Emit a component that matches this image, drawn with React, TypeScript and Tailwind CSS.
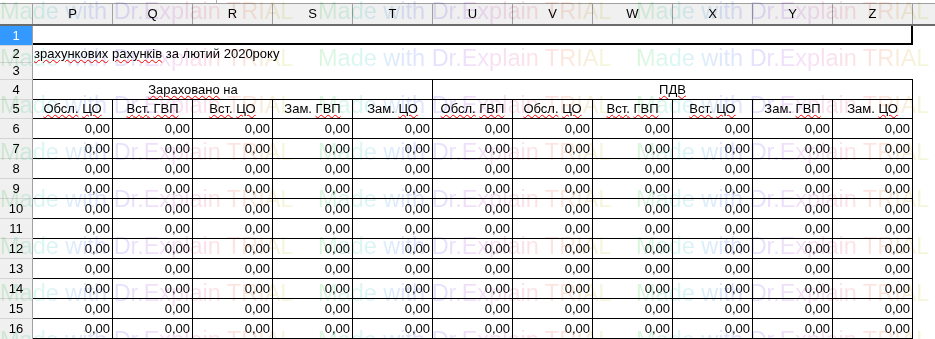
const cols = ['P', 'Q', 'R', 'S', 'T', 'U', 'V', 'W', 'X', 'Y', 'Z'];

const subHeads = [
  'Обсл. ЦО',
  'Вст. ГВП',
  'Вст. ЦО',
  'Зам. ГВП',
  'Зам. ЦО',
  'Обсл. ГВП',
  'Обсл. ЦО',
  'Вст. ГВП',
  'Вст. ЦО',
  'Зам. ГВП',
  'Зам. ЦО',
];

// words the spell checker flags
const typos = new Set(['Обсл.', 'ЦО', 'Вст.', 'ГВП', 'Зараховано', 'ПДВ', 'зрахункових', 'рахунків']);

const dataRows = [6, 7, 8, 9, 10, 11, 12, 13, 14, 15, 16];

function Spell({ text }: { text: string }) {
  const words = text.split(' ');
  return (
    <span className="whitespace-pre">
      {words.map((w, i) => (
        <span key={i}>
          {i > 0 ? ' ' : ''}
          <span
            className={
              typos.has(w)
                ? 'underline decoration-wavy decoration-[#ff0000] decoration-1 underline-offset-[1px]'
                : ''
            }
          >
            {w}
          </span>
        </span>
      ))}
    </span>
  );
}

function RowHead({ n, active = false }: { n: number; active?: boolean }) {
  return (
    <div
      className={`w-[33px] shrink-0 flex items-center justify-center border-r border-r-[#a0a0a0] ${
        active ? 'bg-[#3399ff] text-white' : 'bg-[#f0f0f0] border-t border-t-[#d4d4d4] text-black'
      }`}
    >
      {n}
    </div>
  );
}

function Watermark() {
  const lines = [0, 1, 2, 3, 4, 5, 6, 7];
  const reps = [0, 1, 2, 3];
  return (
    <div className="absolute left-0 top-[-12px] pointer-events-none mix-blend-multiply">
      {lines.map((l) => (
        <div key={l} className="flex h-[47px] leading-[47px] text-[23.5px] whitespace-nowrap">
          {reps.map((r) => (
            <div key={r} className="w-[318px] shrink-0">
              <span className="bg-[linear-gradient(90deg,#dcf6dc,#daf7f3,#dde8fc,#e6e0fc,#f6e0f8,#fbe1e8,#fce7dc,#f2f9da)] bg-clip-text text-transparent">
                Made with Dr.Explain TRIAL
              </span>
            </div>
          ))}
        </div>
      ))}
    </div>
  );
}

export default function App() {
  return (
    <div className="relative w-[935px] h-[339px] overflow-hidden bg-white text-[13px] text-black font-['Liberation_Sans',Arial,sans-serif]">
      {/* toolbar edge */}
      <div className="flex h-[4px] border-b border-[#a0a0a0] bg-white">
        <div className="w-[217px] border-r border-[#b0b0b0]" />
      </div>

      {/* column letters */}
      <div className="flex h-[22px] bg-[#f0f0f0] border-b-2 border-[#6b6b6b]">
        <div className="w-[33px] shrink-0 border-r border-[#a0a0a0]" />
        {cols.map((c) => (
          <div key={c} className="w-[80px] shrink-0 flex items-center justify-center border-r border-[#a0a0a0]">
            {c}
          </div>
        ))}
        <div className="flex-1" />
      </div>

      {/* row 1 */}
      <div className="flex h-[19px]">
        <RowHead n={1} active />
        <div className="w-[880px] border-b-2 border-r-2 border-black" />
      </div>

      {/* row 2 */}
      <div className="flex h-[17px]">
        <RowHead n={2} />
        <div className="flex items-center pl-[1px]">
          <Spell text="зрахункових рахунків за лютий 2020року" />
        </div>
      </div>

      {/* row 3 */}
      <div className="flex h-[17px]">
        <RowHead n={3} />
      </div>

      {/* row 4 */}
      <div className="flex h-[20px]">
        <RowHead n={4} />
        <div className="flex w-[880px] border-t border-black">
          <div className="w-[320px] flex items-center justify-center">
            <Spell text="Зараховано на" />
          </div>
          <div className="w-[80px] border-r border-black" />
          <div className="w-[480px] flex items-center justify-center border-r border-black">
            <Spell text="ПДВ" />
          </div>
        </div>
      </div>

      {/* row 5 */}
      <div className="flex h-[19px]">
        <RowHead n={5} />
        <div className="flex w-[880px] border-t border-black">
          {subHeads.map((h, i) => (
            <div key={i} className="w-[80px] shrink-0 flex items-center justify-center border-r border-black">
              <Spell text={h} />
            </div>
          ))}
        </div>
      </div>

      {/* rows 6-16 */}
      {dataRows.map((n) => (
        <div key={n} className={`flex ${n === 16 ? 'h-[21px]' : 'h-[20px]'}`}>
          <RowHead n={n} />
          <div className={`flex w-[880px] border-t border-black ${n === 16 ? 'border-b' : ''}`}>
            {cols.map((c) => (
              <div key={c} className="w-[80px] shrink-0 flex items-center justify-end pr-[2px] border-r border-black">
                0,00
              </div>
            ))}
          </div>
        </div>
      ))}

      <Watermark />
    </div>
  );
}
